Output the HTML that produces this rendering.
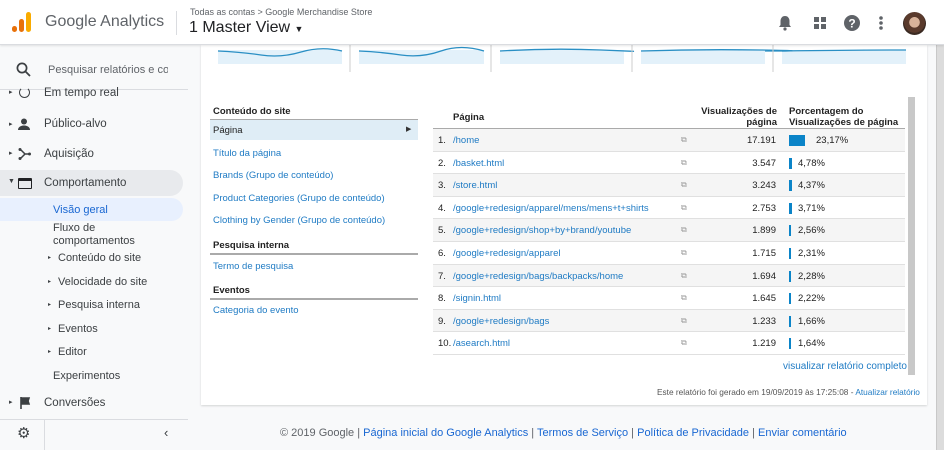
<!DOCTYPE html>
<html><head><meta charset="utf-8"><style>
*{margin:0;padding:0;box-sizing:border-box}
body{width:944px;height:450px;overflow:hidden;background:#f8f9fa;font-family:"Liberation Sans",Arial,sans-serif;position:relative;color:#3c4043}
.a{position:absolute;white-space:nowrap}
.hdr{left:0;top:0;width:944px;height:45px;background:#fff;border-bottom:1px solid #dadce0;box-shadow:0 1px 2px rgba(0,0,0,.1);z-index:3}
.side{left:0;top:45px;width:200px;height:405px;background:#f8f9fa}
.si{font-size:11.5px;color:#3c4043}
.card{left:201px;top:45px;width:726px;height:360px;background:#fff;box-shadow:0 1px 2px rgba(0,0,0,.15)}
.lk{color:#1f7bc4;font-size:9.5px}
.bh{font-size:9.5px;font-weight:bold;color:#222}
.row{position:absolute;left:433px;width:472px;height:22.6px;border-bottom:1px solid #e0e0e0;font-size:9.5px;color:#222}
.row span{position:absolute;top:6px}
</style></head><body>
<div class="a hdr">
  <svg class="a" style="left:12px;top:12px" width="20" height="22"><rect x="0" y="14" width="5" height="6" rx="2.5" fill="#e8710a"/><rect x="7" y="7" width="5" height="13" rx="2.5" fill="#e8710a"/><rect x="14" y="0" width="5" height="20" rx="2.5" fill="#f9ab00"/></svg>
  <div class="a" style="left:45px;top:13px;font-size:16px;color:#5f6368">Google Analytics</div>
  <div class="a" style="left:176px;top:11px;width:1px;height:24px;background:#dadce0"></div>
  <div class="a" style="left:190px;top:7px;font-size:9px;color:#5f6368">Todas as contas &gt; Google Merchandise Store</div>
  <div class="a" style="left:189px;top:19px;font-size:16px;color:#202124">1 Master View <span style="font-size:9px">▼</span></div>
  <svg class="a" style="left:778px;top:15px" width="14" height="16"><path d="M7 1c-3 0-4.5 2.5-4.5 5v4L1 12h12l-1.5-2V6C11.5 3.5 10 1 7 1z" fill="#5f6368"/><circle cx="7" cy="14" r="1.6" fill="#5f6368"/></svg>
  <svg class="a" style="left:814px;top:17px" width="12" height="12" fill="#5f6368"><rect x="0" y="0" width="5" height="5"/><rect x="7" y="0" width="5" height="5"/><rect x="0" y="7" width="5" height="5"/><rect x="7" y="7" width="5" height="5"/></svg>
  <svg class="a" style="left:844px;top:15px" width="16" height="16"><circle cx="8" cy="8" r="8" fill="#5f6368"/><text x="8" y="12.5" font-size="12" font-weight="bold" fill="#fff" text-anchor="middle" font-family="Liberation Sans">?</text></svg>
  <svg class="a" style="left:879px;top:15px" width="4" height="16" fill="#5f6368"><circle cx="2" cy="3" r="1.8"/><circle cx="2" cy="8" r="1.8"/><circle cx="2" cy="13" r="1.8"/></svg>
  <div class="a" style="left:903px;top:12px;width:23px;height:23px;border-radius:50%;background:radial-gradient(circle at 50% 45%,#d9b39a 0 30%,#5a3a2c 32% 60%,#3a2a22 62%)"></div>
</div>

<div class="a side">
  <svg class="a" style="left:16px;top:17px" width="15" height="15"><circle cx="6" cy="6" r="4.6" stroke="#3c4043" stroke-width="1.7" fill="none"/><path d="M9.5 9.5l4.5 4.5" stroke="#3c4043" stroke-width="1.8"/></svg>
  <div class="a" style="left:48px;top:19px;font-size:11px;color:#5f6368;width:120px;overflow:hidden">Pesquisar relatórios e conse</div>
  <div class="a" style="left:0;top:44px;width:188px;height:1px;background:#dadce0"></div>
  <div class="a si" style="left:9px;top:43px;font-size:7px">▸</div>
  <div class="a si" style="left:19px;top:42px;width:11px;height:11px;border:1.5px solid #3c4043;border-radius:50%;border-top-color:transparent"></div>
  <div class="a si" style="left:44px;top:42px;">Em tempo real</div>
  <div class="a si" style="left:9px;top:75px;font-size:7px">▸</div>
  <svg class="a" style="left:18px;top:73px" width="12" height="12" fill="#3c4043"><circle cx="6" cy="3.5" r="3"/><path d="M0 12c0-3 3-4.5 6-4.5s6 1.5 6 4.5z"/></svg>
  <div class="a si" style="left:44px;top:73px">Público-alvo</div>
  <div class="a si" style="left:9px;top:104px;font-size:7px">▸</div>
  <svg class="a" style="left:18px;top:103px" width="13" height="12"><path d="M2 1l5 5-5 5M7 6h5" stroke="#3c4043" stroke-width="1.5" fill="none"/><circle cx="2" cy="1.5" r="1.5" fill="#3c4043"/><circle cx="2" cy="10.5" r="1.5" fill="#3c4043"/><circle cx="11.5" cy="6" r="1.5" fill="#3c4043"/></svg>
  <div class="a si" style="left:44px;top:103px">Aquisição</div>
  <div class="a" style="left:0;top:125px;width:183px;height:26px;background:#e8eaed;border-radius:0 13px 13px 0"></div>
  <div class="a si" style="left:8px;top:133px;font-size:7px">▼</div>
  <div class="a" style="left:18px;top:133px;width:14px;height:11px;border:1.6px solid #202124;border-top-width:3px;border-radius:1px"></div>
  <div class="a si" style="left:44px;top:132px">Comportamento</div>
  <div class="a" style="left:0;top:153px;width:183px;height:23px;background:#e8f0fe;border-radius:0 12px 12px 0"></div>
  <div class="a" style="left:53px;top:159px;font-size:11px;color:#1967d2">Visão geral</div>
  <div class="a si" style="left:53px;top:177px;font-size:11px;line-height:13px">Fluxo de<br>comportamentos</div>
  <div class="a si" style="left:48px;font-size:6px;top:209px">▸</div>
  <div class="a si" style="left:58px;top:207px;font-size:11px">Conteúdo do site</div>
  <div class="a si" style="left:48px;top:233px;font-size:6px">▸</div>
  <div class="a si" style="left:58px;top:231px;font-size:11px">Velocidade do site</div>
  <div class="a si" style="left:48px;top:256px;font-size:6px">▸</div>
  <div class="a si" style="left:58px;top:254px;font-size:11px">Pesquisa interna</div>
  <div class="a si" style="left:48px;top:280px;font-size:6px">▸</div>
  <div class="a si" style="left:58px;top:278px;font-size:11px">Eventos</div>
  <div class="a si" style="left:48px;top:303px;font-size:6px">▸</div>
  <div class="a si" style="left:58px;top:301px;font-size:11px">Editor</div>
  <div class="a si" style="left:53px;top:325px;font-size:11px">Experimentos</div>
  <div class="a si" style="left:9px;top:353px;font-size:7px">▸</div>
  <svg class="a" style="left:20px;top:352px" width="11" height="12"><path d="M1 0v12M1 1h8l-1 3 1 3H1" stroke="#3c4043" stroke-width="1.6" fill="#3c4043"/></svg>
  <div class="a si" style="left:44px;top:352px">Conversões</div>
  <div class="a" style="left:0;top:374px;width:188px;height:1px;background:#dadce0"></div>
  <div class="a" style="left:44px;top:375px;width:1px;height:30px;background:#dadce0"></div>
  <div class="a" style="left:17px;top:379px;font-size:15px;color:#3c4043">⚙</div>
  <div class="a" style="left:164px;top:380px;font-size:13px;color:#3c4043">‹</div>
</div>

<div class="a card">
  <svg class="a" style="left:0;top:0" width="726" height="60">
    <g fill="#e3f1fa" stroke="none"><rect x="17" y="5" width="124" height="14"/><rect x="158" y="5" width="125" height="14"/><rect x="299" y="5" width="124" height="14"/><rect x="440" y="5" width="124" height="14"/><rect x="581" y="5" width="124" height="14"/></g>
    <g stroke="#2a8fc4" stroke-width="1.3" fill="none">
      <path d="M17 6Q40 7 60 10T100 7T141 6"/><path d="M158 6Q180 7 200 10T240 6T283 6"/><path d="M299 6Q350 3 400 5T423 6"/><path d="M440 6Q500 4 560 5T564 6"/><path d="M581 6Q650 5 705 5"/>
    </g>
    <g stroke="#ccc"><path d="M149 0V27M290 0V27M431 0V27M572 0V27"/></g>
  </svg>
  <div class="a bh" style="left:12px;top:61px">Conteúdo do site</div>
  <div class="a" style="left:9px;top:74px;width:208px;height:1.5px;background:#aaa"></div>
  <div class="a" style="left:9px;top:75px;width:208px;height:20px;background:#dfedf6"></div>
  <div class="a" style="left:12px;top:80px;font-size:9.5px;color:#222">Página</div>
  <div class="a" style="left:205px;top:80px;font-size:7px;color:#333">▶</div>
  <div class="a lk" style="left:12px;top:103px">Título da página</div>
  <div class="a lk" style="left:12px;top:125px">Brands (Grupo de conteúdo)</div>
  <div class="a lk" style="left:12px;top:148px">Product Categories (Grupo de conteúdo)</div>
  <div class="a lk" style="left:12px;top:170px">Clothing by Gender (Grupo de conteúdo)</div>
  <div class="a bh" style="left:12px;top:195px">Pesquisa interna</div>
  <div class="a" style="left:9px;top:208px;width:208px;height:1.5px;background:#aaa"></div>
  <div class="a lk" style="left:12px;top:216px">Termo de pesquisa</div>
  <div class="a bh" style="left:12px;top:240px">Eventos</div>
  <div class="a" style="left:9px;top:253px;width:208px;height:1.5px;background:#aaa"></div>
  <div class="a lk" style="left:12px;top:260px">Categoria do evento</div>
  <div class="a" style="left:707px;top:52px;width:7px;height:278px;background:#c8c8c8"></div>
  <div class="a" style="left:456px;top:342px;font-size:8.3px;color:#555">Este relatório foi gerado em 19/09/2019 às 17:25:08 - <span style="color:#1f7bc4">Atualizar relatório</span></div>
</div>

<div class="a bh" style="left:453px;top:112px">Página</div>
<div class="a bh" style="left:680px;top:106px;text-align:right;width:97px;line-height:11px;white-space:normal">Visualizações de página</div>
<div class="a bh" style="left:789px;top:106px;line-height:11px">Porcentagem do<br>Visualizações de página</div>
<div class="a" style="left:433px;top:128px;width:472px;height:1px;background:#aaa"></div>

<div class="row" style="top:129px;background:#f5f5f5"><span style="left:5px">1.</span><span style="left:20px;color:#1f7bc4">/home</span><span style="left:248px;color:#999;font-size:8px">⧉</span><span style="right:129px">17.191</span><i class="a" style="left:356px;top:6px;width:16px;height:11px;background:#0b84c8"></i><span style="left:383px">23,17%</span></div>
<div class="row" style="top:151.6px"><span style="left:5px">2.</span><span style="left:20px;color:#1f7bc4">/basket.html</span><span style="left:248px;color:#999;font-size:8px">⧉</span><span style="right:129px">3.547</span><i class="a" style="left:356px;top:6px;width:3px;height:11px;background:#0b84c8"></i><span style="left:365px">4,78%</span></div>
<div class="row" style="top:174.2px;background:#f5f5f5"><span style="left:5px">3.</span><span style="left:20px;color:#1f7bc4">/store.html</span><span style="left:248px;color:#999;font-size:8px">⧉</span><span style="right:129px">3.243</span><i class="a" style="left:356px;top:6px;width:3px;height:11px;background:#0b84c8"></i><span style="left:365px">4,37%</span></div>
<div class="row" style="top:196.8px"><span style="left:5px">4.</span><span style="left:20px;color:#1f7bc4">/google+redesign/apparel/mens/mens+t+shirts</span><span style="left:248px;color:#999;font-size:8px">⧉</span><span style="right:129px">2.753</span><i class="a" style="left:356px;top:6px;width:3px;height:11px;background:#0b84c8"></i><span style="left:365px">3,71%</span></div>
<div class="row" style="top:219.4px;background:#f5f5f5"><span style="left:5px">5.</span><span style="left:20px;color:#1f7bc4">/google+redesign/shop+by+brand/youtube</span><span style="left:248px;color:#999;font-size:8px">⧉</span><span style="right:129px">1.899</span><i class="a" style="left:356px;top:6px;width:2px;height:11px;background:#0b84c8"></i><span style="left:365px">2,56%</span></div>
<div class="row" style="top:242px"><span style="left:5px">6.</span><span style="left:20px;color:#1f7bc4">/google+redesign/apparel</span><span style="left:248px;color:#999;font-size:8px">⧉</span><span style="right:129px">1.715</span><i class="a" style="left:356px;top:6px;width:2px;height:11px;background:#0b84c8"></i><span style="left:365px">2,31%</span></div>
<div class="row" style="top:264.6px;background:#f5f5f5"><span style="left:5px">7.</span><span style="left:20px;color:#1f7bc4">/google+redesign/bags/backpacks/home</span><span style="left:248px;color:#999;font-size:8px">⧉</span><span style="right:129px">1.694</span><i class="a" style="left:356px;top:6px;width:2px;height:11px;background:#0b84c8"></i><span style="left:365px">2,28%</span></div>
<div class="row" style="top:287.2px"><span style="left:5px">8.</span><span style="left:20px;color:#1f7bc4">/signin.html</span><span style="left:248px;color:#999;font-size:8px">⧉</span><span style="right:129px">1.645</span><i class="a" style="left:356px;top:6px;width:2px;height:11px;background:#0b84c8"></i><span style="left:365px">2,22%</span></div>
<div class="row" style="top:309.8px;background:#f5f5f5"><span style="left:5px">9.</span><span style="left:20px;color:#1f7bc4">/google+redesign/bags</span><span style="left:248px;color:#999;font-size:8px">⧉</span><span style="right:129px">1.233</span><i class="a" style="left:356px;top:6px;width:2px;height:11px;background:#0b84c8"></i><span style="left:365px">1,66%</span></div>
<div class="row" style="top:332.4px"><span style="left:5px">10.</span><span style="left:20px;color:#1f7bc4">/asearch.html</span><span style="left:248px;color:#999;font-size:8px">⧉</span><span style="right:129px">1.219</span><i class="a" style="left:356px;top:6px;width:2px;height:11px;background:#0b84c8"></i><span style="left:365px">1,64%</span></div>
<div class="a" style="left:783px;top:361px;font-size:10px;color:#1f7bc4">visualizar relatório completo</div>

<div class="a" style="left:280px;top:427px;font-size:11px;color:#5f6368">© 2019 Google | <span style="color:#1967d2">Página inicial do Google Analytics</span> | <span style="color:#1967d2">Termos de Serviço</span> | <span style="color:#1967d2">Política de Privacidade</span> | <span style="color:#1967d2">Enviar comentário</span></div>
<div class="a" style="left:936px;top:45px;width:8px;height:405px;background:#dcdcdc;border-left:1px solid #c8c8c8"></div>
</body></html>
